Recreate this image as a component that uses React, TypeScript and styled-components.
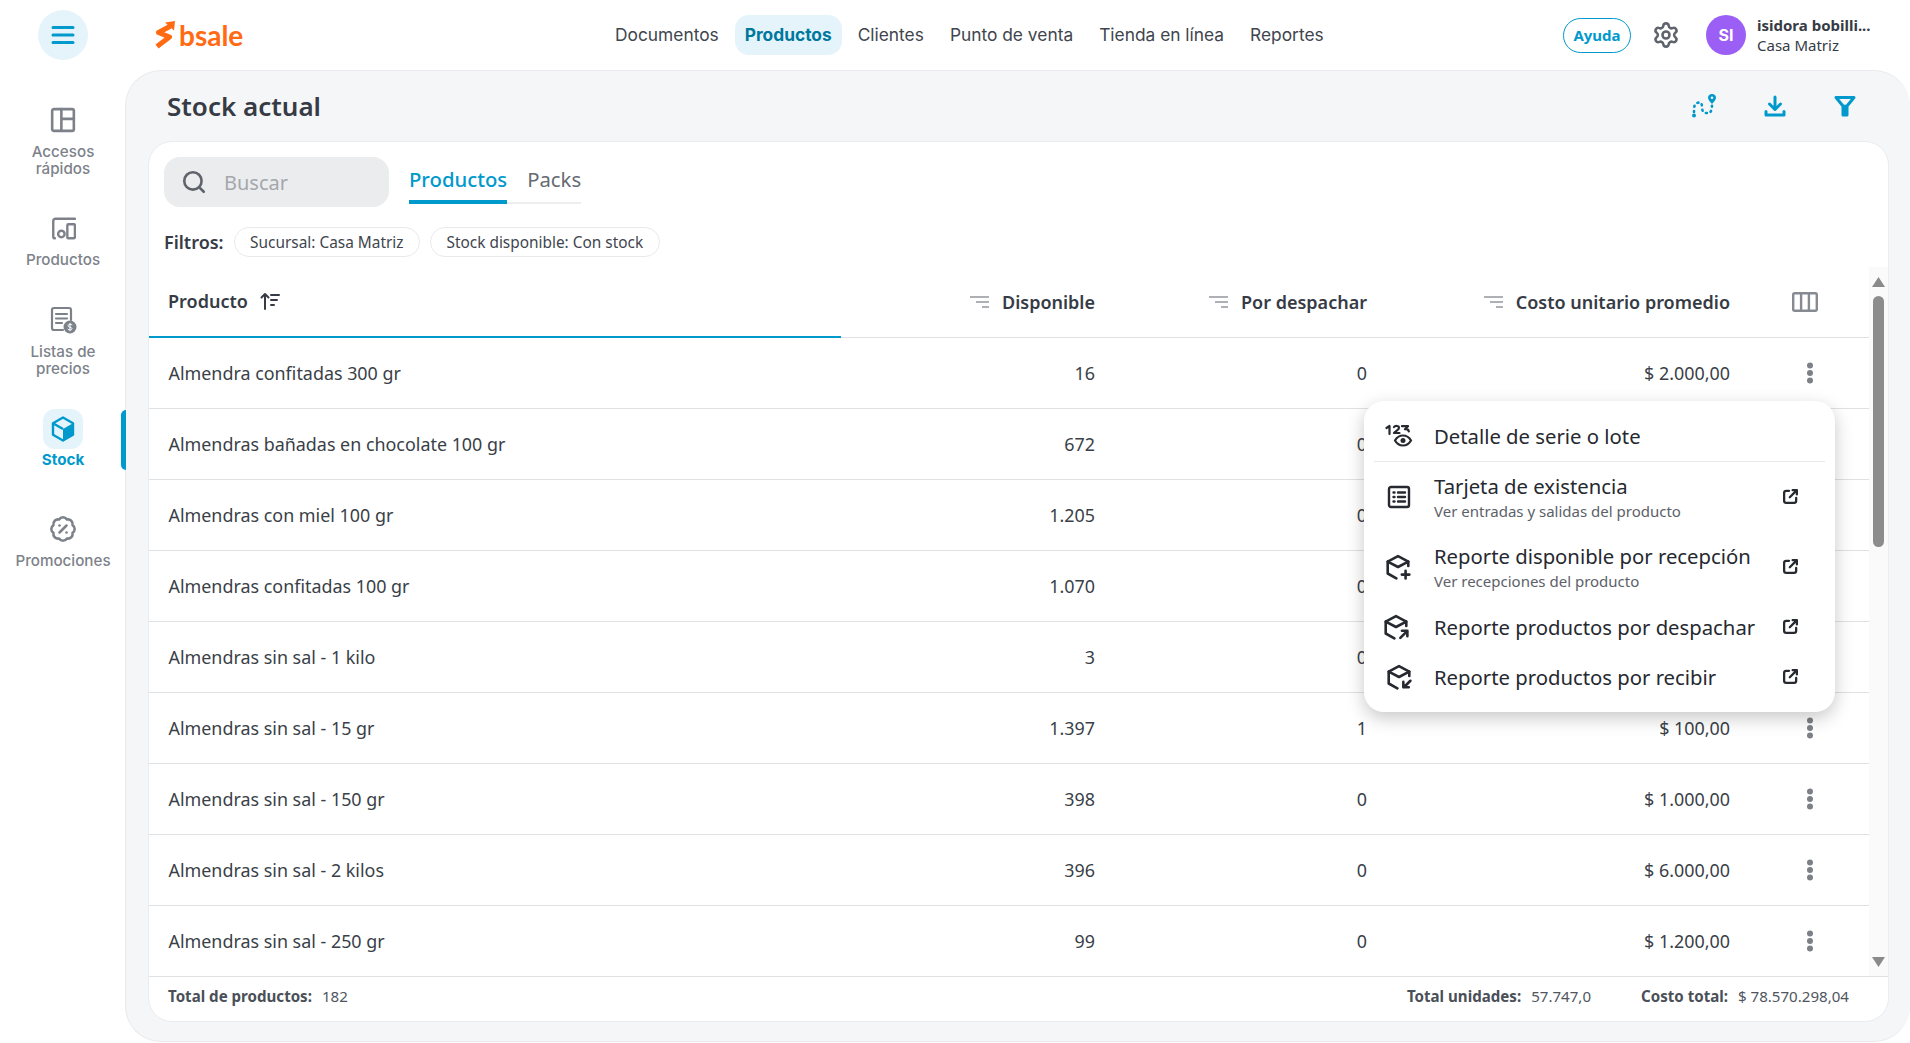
import React from "react";
import styled, { createGlobalStyle } from "styled-components";
import { BadgePercent, Search, Settings } from "lucide-react";

const CYAN = "#0099cc";
const INK = "#363b45";
const MUTED = "#7d828a";

const Global = createGlobalStyle`
  html, body { margin: 0; padding: 0; background: #fff; }
  body { font-family: "Noto Sans", sans-serif; color: ${INK}; overflow: hidden; }
  * { box-sizing: border-box; }
`;

const Page = styled.div`
  position: relative;
  width: 1910px;
  height: 1043px;
  display: grid;
  grid-template-rows: 70px 1fr;
  grid-template-columns: 125px 1fr;
  overflow: hidden;
`;

/* ---------- top bar ---------- */
const TopBar = styled.header`
  grid-column: 1 / 3;
  display: flex;
  align-items: center;
  padding: 0 46px 0 38px;
`;
const MenuButton = styled.button`
  width: 50px;
  height: 50px;
  border: 0;
  border-radius: 50%;
  background: #e5f4fa;
  display: flex;
  align-items: center;
  justify-content: center;
  padding: 0;
`;
const Logo = styled.div`
  display: flex;
  align-items: center;
  gap: 3px;
  margin-left: 67px;
  width: 450px;
  color: #ff6a13;
  font-family: "Lato", sans-serif;
  font-weight: 700;
  font-size: 28px;
`;
const Nav = styled.nav`
  display: flex;
  align-items: center;
  gap: 6px;
  padding-bottom: 1px;
`;
const NavItem = styled.a<{ $active?: boolean }>`
  height: 40px;
  display: flex;
  align-items: center;
  padding: 0 10px;
  border-radius: 14px;
  font-family: "Inter", sans-serif;
  font-size: 17.35px;
  font-weight: ${(p) => (p.$active ? 700 : 400)};
  color: ${(p) => (p.$active ? "#00789e" : "#40454e")};
  background: ${(p) => (p.$active ? "#e5f4fa" : "transparent")};
`;
const TopRight = styled.div`
  margin-left: auto;
  display: flex;
  align-items: center;
`;
const HelpButton = styled.button`
  width: 68px;
  height: 35px;
  border: 1.5px solid ${CYAN};
  border-radius: 18px;
  background: #fff;
  color: ${CYAN};
  font-family: "Noto Sans", sans-serif;
  font-weight: 700;
  font-size: 15px;
  padding: 0;
`;
const GearWrap = styled.div`
  display: flex;
  margin: 0 26px 0 21px;
  color: #5f646c;
`;
const Avatar = styled.div`
  width: 40px;
  height: 40px;
  border-radius: 50%;
  background: #9b5ff5;
  color: #fff;
  font-family: "Inter", sans-serif;
  font-weight: 700;
  font-size: 16px;
  display: flex;
  align-items: center;
  justify-content: center;
`;
const UserBlock = styled.div`
  margin-left: 11px;
  width: 107px;
  font-size: 15px;
  line-height: 20px;
`;
const UserName = styled.div`
  font-weight: 700;
  white-space: nowrap;
`;

/* ---------- side bar ---------- */
const Side = styled.aside`
  position: relative;
  padding: 30px 0 0 1px;
  display: grid;
  grid-template-rows: 108px 92px 109px 100px;
  justify-items: center;
  align-content: start;
`;
const SideItem = styled.a<{ $active?: boolean }>`
  display: flex;
  flex-direction: column;
  align-items: center;
  gap: ${(p) => (p.$active ? 2 : 3)}px;
  font-family: "Inter", sans-serif;
  font-size: 15.2px;
  line-height: 17px;
  font-weight: ${(p) => (p.$active ? 700 : 500)};
  color: ${(p) => (p.$active ? CYAN : MUTED)};
  text-align: center;
`;
const SideIcon = styled.div<{ $active?: boolean }>`
  width: 40px;
  height: 40px;
  border-radius: 12px;
  display: flex;
  align-items: center;
  justify-content: center;
  background: ${(p) => (p.$active ? "#e5f4fa" : "transparent")};
`;
const ActiveBar = styled.div`
  position: absolute;
  right: -1px;
  top: 340px;
  width: 5px;
  height: 60px;
  background: ${CYAN};
  border-radius: 6px 0 0 6px;
`;

/* ---------- main panel ---------- */
const Panel = styled.main`
  height: 972px;
  background: #f5f6f8;
  border: 1px solid #e9eaed;
  border-right: 0;
  border-radius: 36px;
  padding: 0 21px 0 22px;
  display: flex;
  flex-direction: column;
`;
const PanelHead = styled.div`
  height: 70px;
  flex: none;
  display: flex;
  align-items: center;
  padding: 0 32px 0 19px;
`;
const Title = styled.h1`
  margin: 0;
  font-size: 26px;
  font-weight: 600;
  color: ${INK};
`;
const HeadActions = styled.div`
  margin-left: auto;
  display: flex;
  align-items: center;
  gap: 46px;
`;
const Card = styled.section`
  height: 881px;
  background: #fff;
  border: 1px solid #ebecef;
  border-radius: 24px;
  display: flex;
  flex-direction: column;
  overflow: hidden;
`;
const CardTop = styled.div`
  height: 125px;
  flex: none;
  padding: 15px 0 0 15px;
`;
const SearchRow = styled.div`
  display: flex;
  gap: 20px;
`;
const SearchBox = styled.div`
  width: 225px;
  height: 50px;
  border-radius: 16px;
  background: #ebecee;
  display: flex;
  align-items: center;
  padding-left: 17px;
  gap: 17px;
  font-size: 20px;
  color: #a4a7ab;
  svg { color: #5f646c; }
`;
const Tabs = styled.div`
  display: flex;
  height: 47px;
  gap: 20px;
  border-bottom: 2px solid #eceef0;
`;
const Tab = styled.div<{ $active?: boolean }>`
  height: 47px;
  padding-top: 8px;
  font-size: 20.3px;
  line-height: 28px;
  font-weight: ${(p) => (p.$active ? 500 : 400)};
  color: ${(p) => (p.$active ? CYAN : "#666b73")};
  border-bottom: ${(p) => (p.$active ? `4px solid ${CYAN}` : "0")};
  border-radius: 3px 3px 0 0;
`;
const FilterRow = styled.div`
  display: flex;
  align-items: center;
  margin-top: 20px;
  gap: 10px;
`;
const FilterLabel = styled.div`
  font-weight: 600;
  font-size: 18px;
`;
const Chip = styled.div`
  height: 30px;
  border-radius: 15px;
  border: 1px solid #e8e9ec;
  padding: 0 15.5px;
  display: flex;
  align-items: center;
  font-size: 15.4px;
  color: #40454e;
`;
const TableWrap = styled.div`
  height: 709px;
  flex: none;
  display: flex;
`;
const Table = styled.div`
  flex: 1;
  min-width: 0;
`;
const COLS = "692px 254px 272px 363px 1fr";
const HeadRow = styled.div`
  height: 71px;
  display: grid;
  grid-template-columns: ${COLS};
  align-items: center;
  border-bottom: 1px solid #dfe1e4;
  font-size: 18px;
  font-weight: 600;
`;
const ProductHead = styled.div`
  height: 71px;
  display: flex;
  align-items: center;
  gap: 12px;
  padding: 0 0 2px 19px;
  margin-bottom: -1px;
  border-bottom: 2px solid ${CYAN};
`;
const NumHead = styled.div`
  display: flex;
  justify-content: flex-end;
  align-items: center;
  gap: 13px;
`;
const ColumnsBtn = styled.div`
  display: flex;
  padding-left: 62px;
`;
const Row = styled.div`
  height: 71px;
  display: grid;
  grid-template-columns: ${COLS};
  align-items: center;
  border-bottom: 1px solid #dfe1e4;
  font-size: 17.9px;
  color: #3a3f48;
  &:last-child { height: 70px; border-bottom: 0; }
`;
const NameCell = styled.div`
  padding-left: 19.5px;
`;
const NumCell = styled.div`
  text-align: right;
`;
const Kebab = styled.div`
  display: flex;
  padding-left: 72px;
`;
const Track = styled.div`
  width: 19px;
  flex: none;
  background: #fafafa;
  display: flex;
  flex-direction: column;
  align-items: center;
  padding-top: 10px;
  color: #8a8a8a;
`;
const Thumb = styled.div`
  width: 11px;
  height: 251px;
  border-radius: 6px;
  background: #8c8c8c;
  margin: 9px 0 auto;
`;
const BottomArrow = styled.div`
  display: flex;
  margin-bottom: 9px;
`;
const Footer = styled.div`
  flex: 1;
  border-top: 1px solid #dfe1e4;
  display: flex;
  align-items: center;
  padding: 0 39px 6px 19px;
  font-size: 15.1px;
  color: #50555e;
`;
const FootGroup = styled.div<{ $push?: boolean }>`
  margin-left: ${(p) => (p.$push ? "auto" : "50px")};
  white-space: nowrap;
  &:first-child { margin-left: 0; }
`;
const FootLabel = styled.b`
  font-weight: 700;
  margin-right: 10px;
  color: #4a4f58;
`;

/* ---------- pop-up menu ---------- */
const Menu = styled.div`
  position: absolute;
  left: 1364px;
  top: 401px;
  width: 471px;
  height: 311px;
  background: #fff;
  border-radius: 20px;
  padding: 10px 0;
  box-shadow: 0 6px 18px rgba(0, 0, 0, 0.22);
  color: #26292f;
`;
const MenuDivider = styled.div`
  height: 1px;
  margin: 0 10px;
  background: #e8e9ec;
`;
const MenuItem = styled.div<{ $h: number }>`
  height: ${(p) => p.$h}px;
  display: grid;
  grid-template-columns: 70px 1fr 32px;
  align-items: center;
  padding: 0 29px 1px 0;
  font-size: 20.3px;
  line-height: 26px;
  white-space: nowrap;
`;
const MenuIcon = styled.div<{ $nudge?: number }>`
  display: flex;
  justify-content: center;
  padding-right: ${(p) => p.$nudge ?? 0}px;
`;
const MenuSub = styled.div`
  font-size: 15px;
  line-height: 20px;
  color: #5c6169;
  margin-top: 2px;
`;
const MenuExt = styled.div`
  display: flex;
  justify-content: center;
`;

/* ---------- drawings ---------- */
const Ic = ({ s = 24, w, h, vb = "0 0 24 24", c = "currentColor", sw = 2, children }: any) => (
  <svg width={w ?? s} height={h ?? s} viewBox={vb} fill="none" stroke={c} strokeWidth={sw} strokeLinecap="round" strokeLinejoin="round">
    {children}
  </svg>
);

const BurgerIcon = () => (
  <Ic w={24} h={20} vb="0 0 24 20" c={CYAN} sw={3}>
    <path d="M2 2.5h20M2 10h20M2 17.5h20" />
  </Ic>
);
const LogoMark = () => (
  <svg width="21" height="28" viewBox="0 0 21 28" fill="none">
    <path d="M13 6.500L3.500 11.500 14.500 16 4 24" stroke="#ff6a13" strokeWidth="5" strokeLinecap="square" strokeLinejoin="round" />
    <path d="M10 1.500L20 0l-1 9.500z" fill="#ff6a13" />
  </svg>
);
const RouteIcon = () => (
  <svg width="26" height="26" viewBox="0 0 26 26" fill="none" stroke={CYAN} strokeWidth="2.6" strokeLinecap="round">
    <path d="M3 19c0-4 0-8 3-9 4-1.500 5 1 5 4s1 6 4 6 6 1 6-9" strokeDasharray="1 4.200" />
    <circle cx="3" cy="22.500" r="2" fill={CYAN} stroke="none" />
    <path d="M21 1c2.600 0 4 1.800 4 3.800 0 2.400-4 6.200-4 6.200s-4-3.800-4-6.200C17 2.800 18.400 1 21 1z" fill={CYAN} stroke="none" />
    <circle cx="21" cy="4.800" r="1.300" fill="#f5f6f8" stroke="none" />
  </svg>
);
const DownloadIcon = () => (
  <Ic s={24} c={CYAN} sw={3}>
    <path d="M12 3v12M6.500 10l5.500 5.500L17.500 10M3 17.500V21h18v-3.500" />
  </Ic>
);
const FunnelIcon = () => (
  <Ic s={24} c={CYAN} sw={3}>
    <path d="M3 3.500h18l-7 8.500v9h-4v-9z" />
    <path d="M12 12v8" />
  </Ic>
);
const LayoutIcon = () => (
  <Ic s={26} c={MUTED} sw={2.4}>
    <rect x="2" y="2" width="20" height="20" rx="1.500" />
    <path d="M10.500 2v20M10.500 11H22" />
  </Ic>
);
const DeviceIcon = () => (
  <Ic s={26} c={MUTED} sw={2.2}>
    <path d="M23 3.500H5a2 2 0 0 0-2 2V20a1.500 1.500 0 0 0 1.500 1.500" />
    <circle cx="10.500" cy="17.500" r="3" />
    <rect x="16" y="8.500" width="7" height="13" rx="1" />
  </Ic>
);
const PriceIcon = () => (
  <svg width="28" height="28" viewBox="0 0 28 28" fill="none" stroke={MUTED} strokeWidth="2.2" strokeLinecap="round">
    <path d="M14 24H5a2 2 0 0 1-2-2V4a2 2 0 0 1 2-2h15a2 2 0 0 1 2 2v10" />
    <path d="M7 8h11M7 12.500h11M7 17h6" />
    <circle cx="21" cy="21" r="6.500" fill={MUTED} stroke="none" />
    <path d="M23 18.800c-1-.8-4-.8-4 .9 0 2 4 1 4 3 0 1.600-3 1.600-4 .7M21 17.300v7.400" stroke="#fff" strokeWidth="1" />
  </svg>
);
const CubeIcon = () => (
  <svg width="24" height="26" viewBox="0 0 24 26" fill="none">
    <path d="M12 1.500l10 5.700v11.600l-10 5.700-10-5.700V7.200z" stroke={CYAN} strokeWidth="2.400" strokeLinejoin="round" />
    <path d="M12 13l10-5.800v11.600L12 24.500z" fill={CYAN} />
    <path d="M12 13L2 7.200" stroke={CYAN} strokeWidth="2.400" />
  </svg>
);
const SortIcon = () => (
  <Ic w={20} h={20} vb="0 0 20 20" c={INK} sw={2}>
    <path d="M5 18V3M1.500 6.500L5 3l3.500 3.500" />
    <path d="M11 4h8M11 9h6M11 14h3" />
  </Ic>
);
const LinesIcon = () => (
  <svg width="19" height="14" viewBox="0 0 19 14" fill="none" stroke="#adb0b5" strokeWidth="2">
    <path d="M0 2h19M6 7h13M12 12h7" />
  </svg>
);
const ColumnsIcon = () => (
  <svg width="26" height="20" viewBox="0 0 26 20" fill="none" stroke="#868b92" strokeWidth="2.400">
    <rect x="1.200" y="1.200" width="23.600" height="17.600" rx="1.500" />
    <path d="M9.100 1.200v17.600M16.900 1.200v17.600" />
  </svg>
);
const KebabIcon = () => (
  <svg width="16" height="22" viewBox="0 0 16 22" fill="#7d8187">
    <circle cx="8" cy="3.500" r="3" />
    <circle cx="8" cy="11" r="3" />
    <circle cx="8" cy="18.500" r="3" />
  </svg>
);
const ExtIcon = () => (
  <Ic s={17} c="#26292f" sw={3.2}>
    <path d="M10 4H6a3 3 0 0 0-3 3v11a3 3 0 0 0 3 3h11a3 3 0 0 0 3-3v-4" />
    <path d="M15 3h6v6M21 3L11 13" />
  </Ic>
);
const SerialIcon = () => (
  <svg width="28" height="24" viewBox="0 0 28 24" fill="none" stroke="#26292f" strokeWidth="2.200">
    <path d="M1.500 4L4.500 2v8M9 3c1-1.500 5-1.500 5 .8 0 2-3 3-5 5.200h5.500M17 2.200h6l-3 3c2.500 0 3.800 1 3.800 2.300" strokeLinecap="round" strokeLinejoin="round" />
    <path d="M10 16.500c2-3.500 5-5 8-5s6 1.500 8 5c-2 3.500-5 5-8 5s-6-1.500-8-5z" strokeWidth="2.200" fill="#fff" />
    <circle cx="18" cy="16.500" r="2.500" fill="#26292f" stroke="none" />
  </svg>
);
const ListIcon = () => (
  <Ic s={24} c="#26292f" sw={2.400}>
    <rect x="2" y="2" width="20" height="20" rx="2" />
    <path d="M6.500 7.500h1M11 7.500h7M6.500 12h1M11 12h7M6.500 16.500h1M11 16.500h7" />
  </Ic>
);
const BoxBase = ({ children }: { children: React.ReactNode }) => (
  <Ic s={26} c="#26292f" sw={2.400}>
    <path d="M21.500 11V7L12 2 2.500 7v11l8 4.500" />
    <path d="M2.500 7l9.500 5 9.500-5" />
    {children}
  </Ic>
);
const BoxPlus = () => (
  <BoxBase>
    <path d="M19 15.500v7M15.500 19h7" />
  </BoxBase>
);
const BoxOut = () => (
  <BoxBase>
    <path d="M16 22l6-6M17.500 15.500H22.500V20.500" />
  </BoxBase>
);
const BoxIn = () => (
  <BoxBase>
    <path d="M22.500 15.500l-6 6M16 16.500v5h5" />
  </BoxBase>
);

/* ---------- data ---------- */
const rows = [
  ["Almendra confitadas 300 gr", "16", "0", "$ 2.000,00"],
  ["Almendras bañadas en chocolate 100 gr", "672", "0", "$ 1.500,00"],
  ["Almendras con miel 100 gr", "1.205", "0", "$ 800,00"],
  ["Almendras confitadas 100 gr", "1.070", "0", "$ 700,00"],
  ["Almendras sin sal - 1 kilo", "3", "0", "$ 3.000,00"],
  ["Almendras sin sal - 15 gr", "1.397", "1", "$ 100,00"],
  ["Almendras sin sal - 150 gr", "398", "0", "$ 1.000,00"],
  ["Almendras sin sal - 2 kilos", "396", "0", "$ 6.000,00"],
  ["Almendras sin sal - 250 gr", "99", "0", "$ 1.200,00"],
];

const navItems = ["Documentos", "Productos", "Clientes", "Punto de venta", "Tienda en línea", "Reportes"];

export default function App() {
  return (
    <Page>
      <Global />
      <TopBar>
        <MenuButton aria-label="Menú">
          <BurgerIcon />
        </MenuButton>
        <Logo>
          <LogoMark />
          <span>bsale</span>
        </Logo>
        <Nav>
          {navItems.map((n) => (
            <NavItem key={n} $active={n === "Productos"}>
              {n}
            </NavItem>
          ))}
        </Nav>
        <TopRight>
          <HelpButton>Ayuda</HelpButton>
          <GearWrap>
            <Settings size={28} strokeWidth={2.2} />
          </GearWrap>
          <Avatar>SI</Avatar>
          <UserBlock>
            <UserName>isidora bobilli...</UserName>
            <div>Casa Matriz</div>
          </UserBlock>
        </TopRight>
      </TopBar>

      <Side>
        <SideItem>
          <SideIcon>
            <LayoutIcon />
          </SideIcon>
          <span>
            Accesos
            <br />
            rápidos
          </span>
        </SideItem>
        <SideItem>
          <SideIcon>
            <DeviceIcon />
          </SideIcon>
          <span>Productos</span>
        </SideItem>
        <SideItem>
          <SideIcon>
            <PriceIcon />
          </SideIcon>
          <span>
            Listas de
            <br />
            precios
          </span>
        </SideItem>
        <SideItem $active>
          <SideIcon $active>
            <CubeIcon />
          </SideIcon>
          <span>Stock</span>
        </SideItem>
        <SideItem>
          <SideIcon>
            <BadgePercent size={28} color={MUTED} strokeWidth={2.2} />
          </SideIcon>
          <span>Promociones</span>
        </SideItem>
        <ActiveBar />
      </Side>

      <Panel>
        <PanelHead>
          <Title>Stock actual</Title>
          <HeadActions>
            <RouteIcon />
            <DownloadIcon />
            <FunnelIcon />
          </HeadActions>
        </PanelHead>
        <Card>
          <CardTop>
            <SearchRow>
              <SearchBox>
                <Search size={26} strokeWidth={2.4} />
                <span>Buscar</span>
              </SearchBox>
              <Tabs>
                <Tab $active>Productos</Tab>
                <Tab>Packs</Tab>
              </Tabs>
            </SearchRow>
            <FilterRow>
              <FilterLabel>Filtros:</FilterLabel>
              <Chip>Sucursal: Casa Matriz</Chip>
              <Chip>Stock disponible: Con stock</Chip>
            </FilterRow>
          </CardTop>
          <TableWrap>
            <Table>
              <HeadRow>
                <ProductHead>
                  <span>Producto</span>
                  <SortIcon />
                </ProductHead>
                <NumHead>
                  <LinesIcon />
                  <span>Disponible</span>
                </NumHead>
                <NumHead>
                  <LinesIcon />
                  <span>Por despachar</span>
                </NumHead>
                <NumHead>
                  <LinesIcon />
                  <span>Costo unitario promedio</span>
                </NumHead>
                <ColumnsBtn>
                  <ColumnsIcon />
                </ColumnsBtn>
              </HeadRow>
              {rows.map((r) => (
                <Row key={r[0]}>
                  <NameCell>{r[0]}</NameCell>
                  <NumCell>{r[1]}</NumCell>
                  <NumCell>{r[2]}</NumCell>
                  <NumCell>{r[3]}</NumCell>
                  <Kebab>
                    <KebabIcon />
                  </Kebab>
                </Row>
              ))}
            </Table>
            <Track>
              <svg width="13" height="10" viewBox="0 0 13 10" fill="currentColor">
                <path d="M6.500 0L13 10H0z" />
              </svg>
              <Thumb />
              <BottomArrow>
                <svg width="13" height="10" viewBox="0 0 13 10" fill="currentColor">
                  <path d="M6.500 10L0 0h13z" />
                </svg>
              </BottomArrow>
            </Track>
          </TableWrap>
          <Footer>
            <FootGroup>
              <FootLabel>Total de productos:</FootLabel>182
            </FootGroup>
            <FootGroup $push>
              <FootLabel>Total unidades:</FootLabel>57.747,0
            </FootGroup>
            <FootGroup>
              <FootLabel>Costo total:</FootLabel>$ 78.570.298,04
            </FootGroup>
          </Footer>
        </Card>
      </Panel>

      <Menu>
        <MenuItem $h={50}>
          <MenuIcon>
            <SerialIcon />
          </MenuIcon>
          <div>Detalle de serie o lote</div>
        </MenuItem>
        <MenuDivider />
        <MenuItem $h={70}>
          <MenuIcon>
            <ListIcon />
          </MenuIcon>
          <div>
            Tarjeta de existencia
            <MenuSub>Ver entradas y salidas del producto</MenuSub>
          </div>
          <MenuExt>
            <ExtIcon />
          </MenuExt>
        </MenuItem>
        <MenuItem $h={70}>
          <MenuIcon $nudge={2}>
            <BoxPlus />
          </MenuIcon>
          <div>
            Reporte disponible por recepción
            <MenuSub>Ver recepciones del producto</MenuSub>
          </div>
          <MenuExt>
            <ExtIcon />
          </MenuExt>
        </MenuItem>
        <MenuItem $h={50}>
          <MenuIcon $nudge={7}>
            <BoxOut />
          </MenuIcon>
          <div>Reporte productos por despachar</div>
          <MenuExt>
            <ExtIcon />
          </MenuExt>
        </MenuItem>
        <MenuItem $h={50}>
          <MenuIcon>
            <BoxIn />
          </MenuIcon>
          <div>Reporte productos por recibir</div>
          <MenuExt>
            <ExtIcon />
          </MenuExt>
        </MenuItem>
      </Menu>
    </Page>
  );
}
